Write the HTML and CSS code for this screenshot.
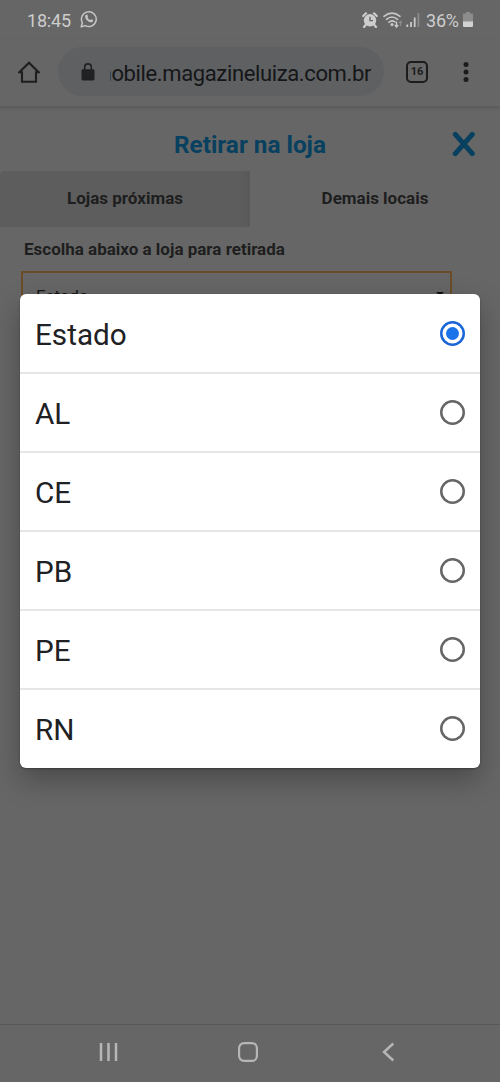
FILE: index.html
```html
<!DOCTYPE html>
<html lang="pt-BR">
<head>
<meta charset="utf-8">
<title>Retirar na loja</title>
<link rel="stylesheet" href="styles.css">
</head>
<body>
<div class="phone">
  <header class="status">
    <span class="clock">18:45</span>
    <svg class="whatsapp" width="18" height="18" viewBox="0 0 18 18"><path d="M1.200 16.800 2.400 12.800A7.400 7.400 0 1 1 5.200 15.600Z" fill="none" stroke="#c6c6c6" stroke-width="1.500" stroke-linejoin="round"/><path d="M6.200 4.700c.5-.4 1-.3 1.200.2l.6 1.500c.1.300-.5.900-.5 1.200.5 1.100 1.400 2 2.600 2.500.4 0 .9-.9 1.200-.8l1.600.8c.5.300.2 1.200-.2 1.600-1 .9-2.500.7-4.200-.3C6.700 10.400 5.200 8.500 5.100 6.700c0-.8.4-1.600 1.100-2Z" fill="#c6c6c6"/></svg>
    <div class="indicators">
      <svg width="16" height="16" viewBox="0 0 16 16"><circle cx="8" cy="8.300" r="6.200" fill="#cdcdcd"/><path d="M1.200 4 4 1.300M14.800 4 12 1.300M3.600 13 2 15M12.400 13 14 15" stroke="#cdcdcd" stroke-width="2.200" stroke-linecap="round"/><path d="M8 4.800v3.800h3" fill="none" stroke="#666" stroke-width="1.400"/></svg>
      <svg class="wifi" width="20" height="16" viewBox="0 0 20 16"><g fill="none" stroke="#c9c9c9" stroke-width="1.600" stroke-linecap="round"><path d="M1 4.300Q9 -2.200 17 4.300M3.500 7.300Q9 2.700 14.500 7.300M6 10.200Q9 7.600 12 10"/></g><circle cx="9" cy="12.600" r="1.600" fill="#c9c9c9"/><path d="M13.500 9.500v5M11.800 13l1.700 2 1.700-2" fill="none" stroke="#c9c9c9" stroke-width="1.400"/><path d="M17.500 14V9.500M16 11l1.500-1.700L19 11" fill="none" stroke="#8b8b8b" stroke-width="1.200"/></svg>
      <svg class="signal" width="14" height="14" viewBox="0 0 14 14"><path d="M1.300 14v-2.500M5 14V9M8.700 14V4.500" stroke="#c9c9c9" stroke-width="1.800"/><path d="M12.400 14V0" stroke="#8b8b8b" stroke-width="1.800"/></svg>
      <span class="percent">36%</span>
      <svg class="battery" width="10" height="15" viewBox="0 0 10 15"><path d="M3 0h4v1.500h2q1 0 1 1V10H0V2.500q0-1 1-1h2Z" fill="#8c8c8c"/><path d="M0 9.500h10V14q0 1-1 1H1q-1 0-1-1Z" fill="#d2d2d2"/></svg>
    </div>
  </header>
  <nav class="browser">
    <svg class="home" width="22" height="22" viewBox="0 0 22 22"><path d="M1.300 11.300 11 1.800 20.700 11.300H18V20.700H4V11.300Z" fill="none" stroke="#1e1e1f" stroke-width="2.100"/></svg>
    <div class="address">
      <svg width="14" height="18" viewBox="0 0 14 18"><rect x=".5" y="6.200" width="13" height="11.300" rx="1.400" fill="#202123"/><path d="M3.700 7V4.200a3.300 3.300 0 0 1 6.600 0V7" fill="none" stroke="#202123" stroke-width="1.600"/></svg>
      <div class="url"><span>mobile.magazineluiza.com.br</span></div>
    </div>
    <div class="tabcount">16</div>
    <svg class="more" width="6" height="20" viewBox="0 0 6 20"><g fill="#1c1c1d"><circle cx="3" cy="2.600" r="2.500"/><circle cx="3" cy="10" r="2.500"/><circle cx="3" cy="17.400" r="2.500"/></g></svg>
  </nav>
  <main class="page">
    <div class="titlebar">
      <h1>Retirar na loja</h1>
      <svg class="close" width="24" height="26" viewBox="0 0 24 26"><path d="M3.300 3.300 20.300 22.700M20.300 3.300 3.300 22.700" stroke="#08405f" stroke-width="5" stroke-linecap="round"/></svg>
    </div>
    <div class="tabs"><div class="tab near">Lojas próximas</div><div class="tab">Demais locais</div></div>
    <h2>Escolha abaixo a loja para retirada</h2>
    <div class="select"><span>Estado</span><i class="caret"></i></div>
  </main>
  <footer class="system">
    <svg width="20" height="20" viewBox="0 0 20 20"><path d="M2 1v18M9.500 1v18M17 1v18" stroke="#b6b6b6" stroke-width="2.500"/></svg>
    <svg width="20" height="20" viewBox="0 0 20 20"><rect x="1.100" y="1.100" width="17.800" height="17.800" rx="5" fill="none" stroke="#b6b6b6" stroke-width="2.200"/></svg>
    <svg width="20" height="20" viewBox="0 0 20 20"><path d="M15.300 1.500 6 10l9.300 8.500" fill="none" stroke="#b6b6b6" stroke-width="2.400"/></svg>
  </footer>
  <div class="dialog">
    <div class="option"><span>Estado</span><i class="radio on"></i></div>
    <div class="option"><span>AL</span><i class="radio"></i></div>
    <div class="option"><span>CE</span><i class="radio"></i></div>
    <div class="option"><span>PB</span><i class="radio"></i></div>
    <div class="option"><span>PE</span><i class="radio"></i></div>
    <div class="option"><span>RN</span><i class="radio"></i></div>
  </div>
</div>
</body>
</html>
```
FILE: styles.css
```css
* { box-sizing: border-box; }
body { margin: 0; background: #666; font-family: Roboto, "Liberation Sans", sans-serif; }
svg { display: block; flex: none; }
.phone { position: relative; display: flex; flex-direction: column; width: 500px; height: 1082px; overflow: hidden; background: #666; }
.status { display: flex; align-items: center; height: 40px; padding: 0 27px 0 27px; color: #cdcdcd; font-size: 18px; }
.clock { width: 53px; letter-spacing: -.2px; }
.whatsapp { margin-bottom: 2px; }
.indicators { display: flex; align-items: center; margin-left: auto; }
.indicators svg { margin-bottom: 1px; }
.wifi { margin-left: 5px; }
.signal { margin-left: 3px; }
.percent { margin-left: 6px; width: 36px; white-space: nowrap; letter-spacing: -.2px; }
.battery { margin-left: 1px; }
.browser { display: flex; align-items: center; height: 68px; padding: 0 31px 3px 18px; border-bottom: 2px solid #5d5d5d; box-shadow: 0 1px 2px #606060; }
.address { display: flex; align-items: center; width: 326px; height: 49px; margin-left: 18px; padding: 0 13px 0 23px; border-radius: 25px; background: #5e6062; }
.url { display: flex; justify-content: flex-end; width: 261px; margin-left: auto; padding-top: 4px; overflow: hidden; color: #151618; font-size: 22px; line-height: 30px; letter-spacing: -.37px; white-space: nowrap; }
.home { margin-top: 1px; }
.tabcount { width: 22px; height: 22px; margin-left: 22px; border: 2px solid #1c1c1d; border-radius: 5px; color: #1c1c1d; font-size: 11px; font-weight: 700; line-height: 18px; text-align: center; }
.more { margin-left: auto; }
.page { flex: 1; }
.titlebar { display: grid; grid-template-columns: 48px 1fr 48px; align-items: center; height: 63px; padding: 10px 0 0; }
h1 { grid-column: 2; margin: 0; color: #08405f; font-size: 24.300px; font-weight: 700; line-height: 30px; text-align: center; padding-top: 1px; }
.close { margin-bottom: 2px; }
.tabs { display: flex; height: 56px; }
.tab { flex: 1; color: #1e1e1e; font-size: 17px; font-weight: 700; line-height: 54px; text-align: center; }
.near { border-radius: 5px 0 0; background: linear-gradient(90deg, #5d5d5d 95%, #595959); }
h2 { margin: 0; padding: 11px 0 0 24px; color: #1e1e1e; font-size: 17px; font-weight: 700; line-height: 22px; white-space: nowrap; }
.select { display: flex; align-items: center; justify-content: space-between; width: 431px; height: 50px; margin: 11px 0 0 21px; padding: 0 6px 0 13px; border: 2px solid #6b4c26; color: #151515; font-size: 17px; }
.caret { width: 0; height: 0; border: 4px solid transparent; border-top-color: #111; }
.system { display: flex; justify-content: space-between; height: 58px; padding: 17px 102px 0 99px; border-top: 1px solid #585858; }
.system svg:nth-child(2) { margin-right: 2px; }
.dialog { position: absolute; top: 294px; left: 20px; width: 460px; padding-bottom: .5px; border-radius: 6px; background: #fff; box-shadow: 0 12px 28px rgba(0,0,0,.28), 0 1px 2px rgba(0,0,0,.3); }
.option { display: flex; align-items: center; justify-content: space-between; height: 79px; padding: 0 15px; border-top: 2px solid #e6e6e6; color: #202124; font-size: 29.700px; }
.option span { padding-top: 1px; }
.option:first-child { height: 78px; border-top: 0; }
.option:first-child span { padding-top: 3px; }
.radio { width: 25px; height: 25px; border-radius: 50%; box-shadow: inset 0 0 0 2.500px #666; }
.on { display: grid; place-items: center; box-shadow: inset 0 0 0 2.500px #1a66d8; }
.on::after { content: ""; width: 13px; height: 13px; border-radius: 50%; background: #1a73e8; }
```
